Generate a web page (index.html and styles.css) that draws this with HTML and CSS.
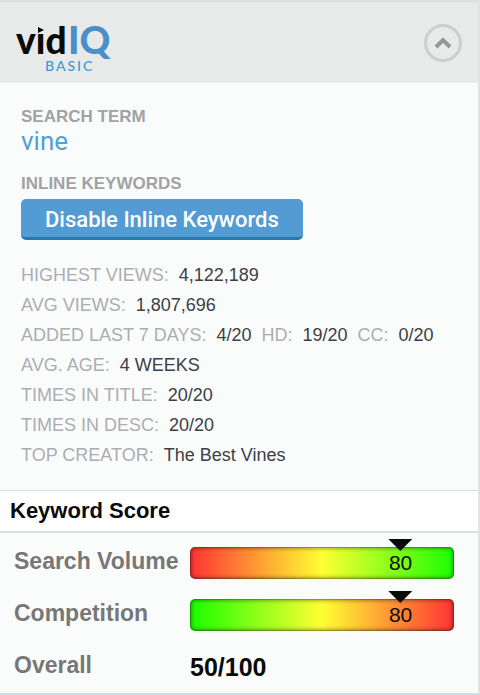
FILE: index.html
```html
<!DOCTYPE html>
<html lang="en">
<head>
<meta charset="utf-8">
<meta name="viewport" content="width=device-width, initial-scale=1">
<title>vidIQ Basic</title>
<link rel="stylesheet" href="styles.css">
</head>
<body>
<main class="panel">
  <header class="header">
    <svg class="logo" viewBox="0 0 100 50" role="img" aria-label="vidIQ Basic">
      <text class="logo-vid" x="0" y="31">vıd</text>
      <path d="M22 4l6 3-6 3z"/>
      <text class="logo-iq" x="52" y="31">IQ</text>
      <text class="logo-basic" x="29" y="48">BASIC</text>
    </svg>
    <button class="collapse" type="button" aria-label="Collapse panel">
      <svg viewBox="0 0 38 38" aria-hidden="true">
        <circle cx="19" cy="19" r="17.5"/>
        <path d="M12 23l7-7 7 7"/>
      </svg>
    </button>
  </header>

  <section class="details">
    <h2 class="label">SEARCH TERM</h2>
    <p class="term">vine</p>
    <h2 class="label">INLINE KEYWORDS</h2>
    <button class="toggle" type="button">Disable Inline Keywords</button>
    <dl class="stats">
      <div class="row"><dt>HIGHEST VIEWS:</dt><dd>4,122,189</dd></div>
      <div class="row"><dt>AVG VIEWS:</dt><dd>1,807,696</dd></div>
      <div class="row">
        <dt>ADDED LAST 7 DAYS:</dt><dd>4/20</dd>
        <dt>HD:</dt><dd>19/20</dd>
        <dt>CC:</dt><dd>0/20</dd>
      </div>
      <div class="row"><dt>AVG. AGE:</dt><dd>4 WEEKS</dd></div>
      <div class="row"><dt>TIMES IN TITLE:</dt><dd>20/20</dd></div>
      <div class="row"><dt>TIMES IN DESC:</dt><dd>20/20</dd></div>
      <div class="row"><dt>TOP CREATOR:</dt><dd>The Best Vines</dd></div>
    </dl>
  </section>

  <h2 class="score-title">Keyword Score</h2>
  <dl class="scores">
    <dt>Search Volume</dt>
    <dd class="bar bar-volume"><span class="marker" style="left: 80%">80</span></dd>
    <dt>Competition</dt>
    <dd class="bar bar-competition"><span class="marker" style="left: 80%">80</span></dd>
    <dt>Overall</dt>
    <dd class="overall">50/100</dd>
  </dl>
</main>
</body>
</html>
```
FILE: styles.css
```css
* {
  box-sizing: border-box;
}

body {
  margin: 0;
  background: #fafcfb;
  font-family: "Liberation Sans", Arial, sans-serif;
}

h2, p, dl, dd {
  margin: 0;
}

button {
  border: 0;
  padding: 0;
  cursor: pointer;
}

.panel {
  border-top: 2px solid #dfe0e0;
  border-right: 2px solid #e0e2e3;
  border-bottom: 2px solid #cfdfea;
  background: #fafcfb;
}

.header {
  display: flex;
  justify-content: space-between;
  align-items: center;
  height: 81px;
  padding: 0 16px;
  background: #e8eae9;
}

.logo {
  width: 100px;
  height: 50px;
  margin-top: 10px;
  overflow: visible;
  font-family: Lato, sans-serif;
}

.logo-vid {
  font-size: 37px;
  font-weight: 900;
  fill: #0a0a0a;
}

.logo-iq {
  font-size: 38px;
  font-weight: 900;
  fill: #4a90c8;
}

.logo-basic {
  font-size: 14px;
  font-weight: 500;
  letter-spacing: 2px;
  fill: #3f97d3;
}

.collapse {
  width: 38px;
  height: 38px;
  background: none;
}

.collapse svg {
  display: block;
  fill: none;
}

.collapse circle {
  stroke: #cdcfcf;
  stroke-width: 3;
}

.collapse path {
  stroke: #94989b;
  stroke-width: 4;
}

.details {
  padding: 24px 20px 20px 21px;
}

.label {
  font-size: 17px;
  line-height: 20px;
  color: #a0a2a5;
}

.term {
  margin-bottom: 19px;
  font-family: Roboto, sans-serif;
  font-size: 26px;
  line-height: 28px;
  color: #559fd6;
}

.toggle {
  display: block;
  height: 41px;
  margin-top: 5px;
  padding: 3px 24px 0;
  border-bottom: 3px solid #2878b0;
  border-radius: 5px;
  background: #529bd3;
  color: #fff;
  font-family: Roboto, sans-serif;
  font-size: 22px;
  line-height: 34px;
  font-weight: 500;
}

.stats {
  margin-top: 20px;
  font-size: 18px;
  line-height: 30px;
}

.row {
  display: flex;
  gap: 10px;
}

.stats dt {
  color: #abadb2;
}

.stats dd {
  color: #3c4044;
}

.score-title {
  padding: 0 10px;
  border-top: 1px solid #d9dde4;
  border-bottom: 2px solid #d5e1ea;
  background: #fff;
  color: #0a0a0a;
  font-size: 22px;
  line-height: 40px;
}

.scores {
  display: grid;
  grid-template-columns: 164px 1fr;
  gap: 20px 12px;
  padding: 14px 24px 10px 14px;
}

.scores dt {
  color: #777;
  font-size: 23px;
  font-weight: bold;
  line-height: 28px;
  white-space: nowrap;
}

.bar {
  position: relative;
  height: 32px;
  border: 1px solid rgba(0, 0, 0, 0.4);
  border-radius: 5px;
  box-shadow: inset 0 0 4px rgba(0, 0, 0, 0.5);
  background-origin: border-box;
}

.bar-volume {
  background-image: linear-gradient(to right, #ff3333, #ffff33 50%, #1aff00);
}

.bar-competition {
  background-image: linear-gradient(to right, #1aff00, #ffff33 50%, #ff3333);
}

.marker {
  position: absolute;
  top: 3px;
  transform: translateX(-50%);
  color: #0a0a0a;
  font-size: 21px;
  line-height: 24px;
}

.marker::before {
  content: "";
  position: absolute;
  top: -12px;
  left: 50%;
  margin-left: -12px;
  border: 12px solid transparent;
  border-top-color: #0a0a0a;
  border-bottom: 0;
}

.overall {
  color: #0a0a0a;
  font-size: 25px;
  font-weight: bold;
  line-height: 32px;
}
```
